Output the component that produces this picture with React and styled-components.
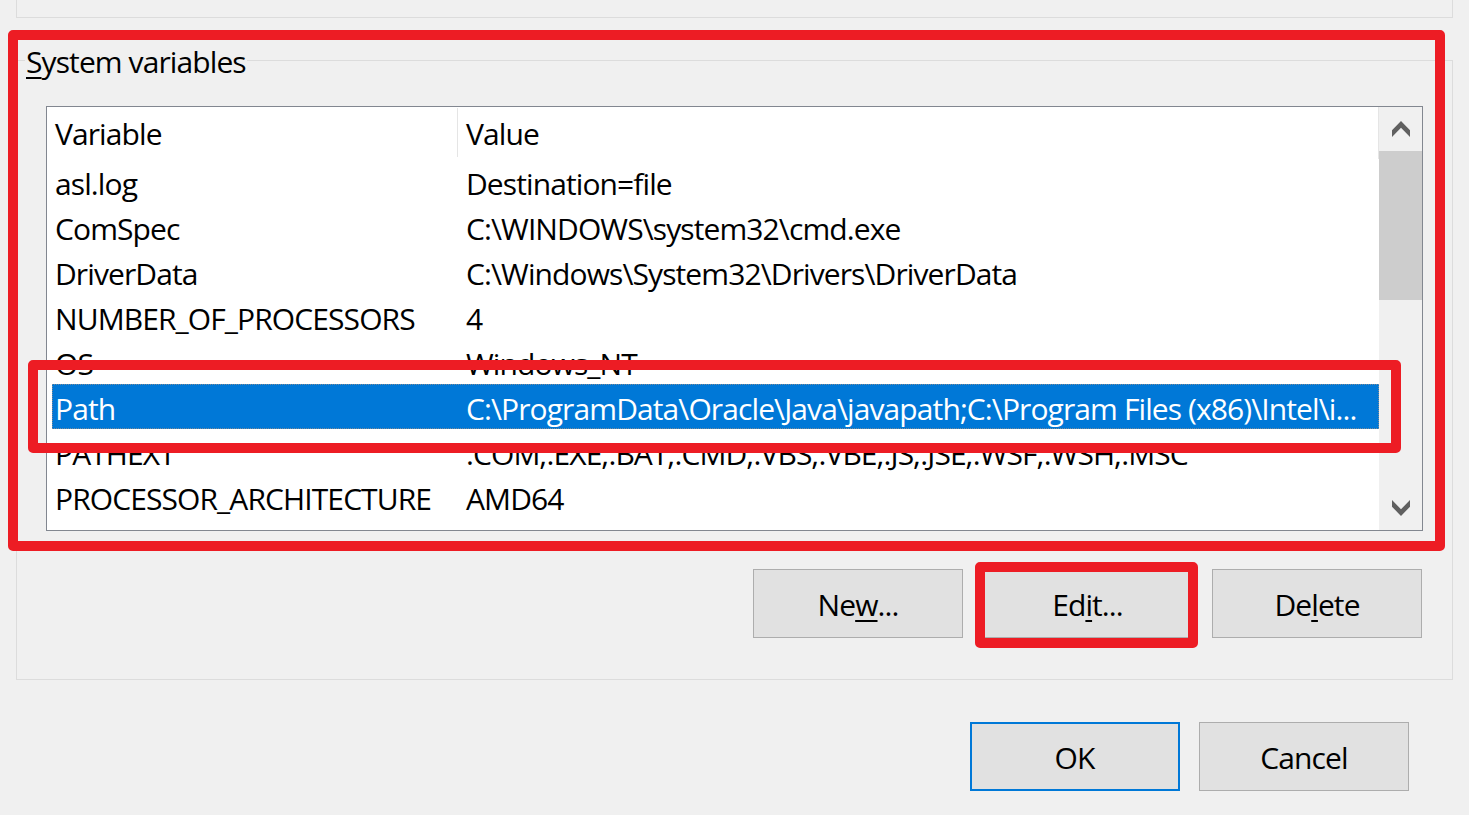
import React from "react";
import styled, { createGlobalStyle } from "styled-components";

const GlobalStyle = createGlobalStyle`
  html, body {
    margin: 0;
    padding: 0;
    background: #f0f0f0;
  }
  body {
    font-family: "Open Sans", "Noto Sans", "Liberation Sans", sans-serif;
  }
`;

const Dialog = styled.div`
  position: relative;
  width: 1469px;
  height: 815px;
  overflow: hidden;
  background: #f0f0f0;
  color: #000;
  font-size: 30px;
  letter-spacing: -0.9px;
`;

// bottom of the "User variables" group, cut off by the top of the shot
const UpperGroup = styled.div`
  margin: 0 16px;
  height: 17px;
  border: 1px solid #dcdcdc;
  border-top: none;
`;

const GroupBox = styled.div`
  box-sizing: border-box;
  margin: 42px 16px 0;
  height: 620px;
  border: 1px solid #dcdcdc;
`;

const Legend = styled.div`
  width: fit-content;
  margin: -19px 0 0 8px;
  padding: 0 1px;
  line-height: 40px;
  background: #f0f0f0;
`;

const Key = styled.span`
  text-decoration: underline;
  text-decoration-thickness: 2px;
  text-underline-offset: 4px;
`;

const ListBox = styled.div`
  box-sizing: border-box;
  display: flex;
  margin: 24px 0 0 29px;
  width: 1377px;
  height: 425px;
  border: 1px solid #828790;
  background: #fff;
`;

const Table = styled.div`
  flex: 1;
  overflow: hidden;
`;

const HeaderRow = styled.div`
  display: grid;
  grid-template-columns: 406px 1fr;
  height: 52px;
  margin-left: 5px;
  border-right: 1px solid #e5e5e5;
  box-sizing: border-box;
`;

const HeaderCell = styled.div`
  display: flex;
  align-items: center;
  padding: 2px 0 0 ${(p) => (p.$first ? "3px" : "8px")};
  border-right: ${(p) => (p.$first ? "1px solid #e5e5e5" : "none")};
  margin: 1px 0 2px;
`;

const Row = styled.div`
  display: grid;
  grid-template-columns: 406px 1fr;
  height: 45px;
  margin-left: 5px;
  box-sizing: border-box;
  background: ${(p) => (p.$selected ? "#0078d7" : "transparent")};
  color: ${(p) => (p.$selected ? "#fff" : "#000")};
  outline: ${(p) => (p.$selected ? "1px dotted #7d8a96" : "none")};
  outline-offset: -1px;
`;

const Cell = styled.div`
  display: flex;
  align-items: center;
  padding: 3px 0 0 ${(p) => (p.$first ? "3px" : "8px")};
  white-space: nowrap;
  overflow: hidden;
`;

const ScrollBar = styled.div`
  display: flex;
  flex-direction: column;
  width: 43px;
  background: #f0f0f0;
`;

const ArrowButton = styled.div`
  display: flex;
  align-items: center;
  justify-content: center;
  height: 44px;
`;

const Thumb = styled.div`
  height: 149px;
  background: #cdcdcd;
`;

const Track = styled.div`
  flex: 1;
`;

const ButtonRow = styled.div`
  display: flex;
  justify-content: flex-end;
  gap: 19.5px;
  margin: ${(p) => p.$margin};
`;

const Button = styled.button`
  box-sizing: border-box;
  width: 210px;
  height: 69px;
  padding: 2px 0 0;
  font: inherit;
  letter-spacing: inherit;
  color: #000;
  background: #e1e1e1;
  border: ${(p) => (p.$default ? "2px solid #0078d7" : "1px solid #adadad")};
`;

const Mark = styled.div`
  position: absolute;
  box-sizing: border-box;
  left: ${(p) => p.$x}px;
  top: ${(p) => p.$y}px;
  width: ${(p) => p.$w}px;
  height: ${(p) => p.$h}px;
  border: 10px solid #ed1c24;
  border-radius: 5px;
  pointer-events: none;
`;

const Chevron = ({ down }) => (
  <svg width="18" height="16" viewBox="0 0 18 16">
    <polygon
      fill="#606060"
      points="0,9.3 9,0 18,9.3 18,16 9,6.7 0,16"
      transform={down ? "rotate(180 9 8)" : undefined}
    />
  </svg>
);

const rows = [
  ["asl.log", "Destination=file"],
  ["ComSpec", "C:\\WINDOWS\\system32\\cmd.exe"],
  ["DriverData", "C:\\Windows\\System32\\Drivers\\DriverData"],
  ["NUMBER_OF_PROCESSORS", "4"],
  ["OS", "Windows_NT"],
  ["Path", "C:\\ProgramData\\Oracle\\Java\\javapath;C:\\Program Files (x86)\\Intel\\i..."],
  ["PATHEXT", ".COM;.EXE;.BAT;.CMD;.VBS;.VBE;.JS;.JSE;.WSF;.WSH;.MSC"],
  ["PROCESSOR_ARCHITECTURE", "AMD64"],
];

export default function App() {
  return (
    <Dialog>
      <GlobalStyle />
      <UpperGroup />
      <GroupBox>
        <Legend>
          <Key>S</Key>ystem variables
        </Legend>
        <ListBox>
          <Table>
            <HeaderRow>
              <HeaderCell $first>Variable</HeaderCell>
              <HeaderCell>Value</HeaderCell>
            </HeaderRow>
            {rows.map(([name, value]) => (
              <Row key={name} $selected={name === "Path"}>
                <Cell $first>{name}</Cell>
                <Cell>{value}</Cell>
              </Row>
            ))}
          </Table>
          <ScrollBar>
            <ArrowButton>
              <Chevron />
            </ArrowButton>
            <Thumb />
            <Track />
            <ArrowButton>
              <Chevron down />
            </ArrowButton>
          </ScrollBar>
        </ListBox>
        <ButtonRow $margin="38px 30px 0 0">
          <Button>
            Ne<Key>w</Key>...
          </Button>
          <Button>
            Ed<Key>i</Key>t...
          </Button>
          <Button>
            De<Key>l</Key>ete
          </Button>
        </ButtonRow>
      </GroupBox>
      <ButtonRow $margin="42px 60px 0 0">
        <Button $default>OK</Button>
        <Button>Cancel</Button>
      </ButtonRow>

      <Mark $x={8} $y={30} $w={1437} $h={521} />
      <Mark $x={28} $y={360} $w={1373} $h={93} />
      <Mark $x={975} $y={562} $w={223} $h={86} />
    </Dialog>
  );
}
